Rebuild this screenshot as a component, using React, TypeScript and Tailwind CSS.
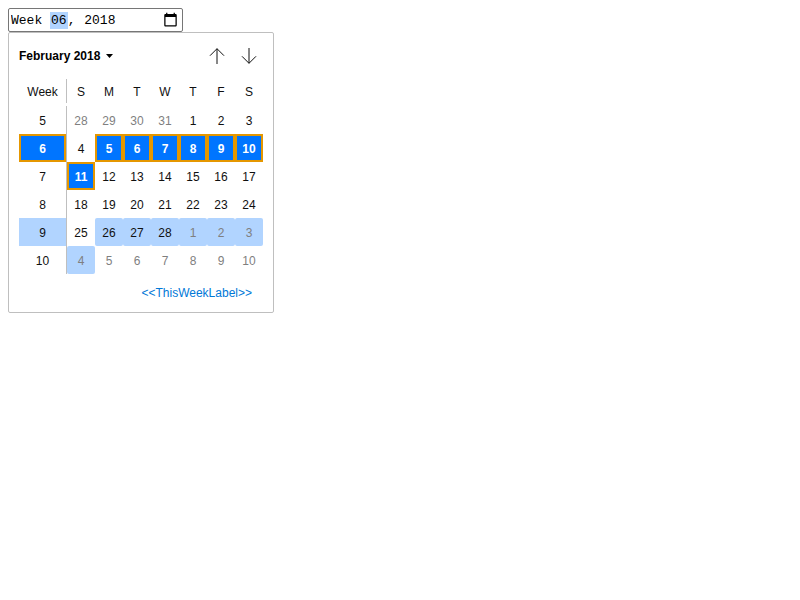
import React from "react";

type Week = { number: number; days: number[] };

const weekdays = ["S", "M", "T", "W", "T", "F", "S"];

const weeks: Week[] = [
  { number: 5, days: [28, 29, 30, 31, 1, 2, 3] },
  { number: 6, days: [4, 5, 6, 7, 8, 9, 10] },
  { number: 7, days: [11, 12, 13, 14, 15, 16, 17] },
  { number: 8, days: [18, 19, 20, 21, 22, 23, 24] },
  { number: 9, days: [25, 26, 27, 28, 1, 2, 3] },
  { number: 10, days: [4, 5, 6, 7, 8, 9, 10] },
];

const selectedStyle = "border-2 border-[#e59700] bg-[#0075ff] font-bold text-white";

// ISO weeks start on Monday, so a row's Sunday belongs to the week before.
function isoWeek(row: number, column: number) {
  return column === 0 ? weeks[row].number - 1 : weeks[row].number;
}

function weekStyle(week: number) {
  if (week === 6) return selectedStyle;
  if (week === 9) return "bg-[#b1d4ff] text-[#101010]";
  return "text-[#101010]";
}

function dayStyle(row: number, column: number) {
  const week = isoWeek(row, column);
  if (week === 6) return selectedStyle;
  const day = weeks[row].days[column];
  const outside = (row === 0 && day > 20) || (row > 3 && day < 20);
  const color = outside ? "text-[#7f7f7f]" : "text-[#101010]";
  return week === 9 ? `rounded-xs bg-[#b1d4ff] ${color}` : color;
}

function WeekField() {
  return (
    <div className="relative w-[175px]">
      <input
        type="week"
        aria-label="Week"
        defaultValue="2018-W06"
        className="block h-6 w-full rounded-xs border border-[#767676] bg-white px-0.5 pt-px font-['Liberation_Mono',monospace] text-[13px] text-black outline-none [&::-webkit-calendar-picker-indicator]:opacity-0 [&::-webkit-datetime-edit-week-field]:bg-[#b1d4ff]"
      />
      <svg
        className="pointer-events-none absolute top-1 right-[5px] size-[15px]"
        viewBox="0 0 24 24"
        fill="black"
        aria-hidden="true"
      >
        <path d="M20 3h-1V1h-2v2H7V1H5v2H4c-1.1 0-2 .9-2 2v16c0 1.1.9 2 2 2h16c1.1 0 2-.9 2-2V5c0-1.1-.9-2-2-2zm0 18H4V8h16v13z" />
      </svg>
    </div>
  );
}

function Arrow({ direction }: { direction: "up" | "down" }) {
  return (
    <button
      type="button"
      aria-label={direction === "up" ? "Previous month" : "Next month"}
      className="flex h-6 w-7 items-center justify-center"
    >
      <svg
        className="size-4"
        viewBox="0 0 16 16"
        fill="none"
        stroke="#101010"
        strokeWidth="1"
        aria-hidden="true"
      >
        <path d={direction === "up" ? "M8 16V.7M1 7.7l7-7 7 7" : "M8 0v15.3M1 8.3l7 7 7-7"} />
      </svg>
    </button>
  );
}

export default function App() {
  return (
    <main className="p-2 font-['Liberation_Sans',Arial,sans-serif] text-xs text-[#101010]">
      <WeekField />
      <section className="w-fit rounded-xs border border-[#bfbfbf] bg-white px-[10px]">
        <header className="flex h-[46px] items-center justify-between">
          <button type="button" className="flex items-center gap-1.5 font-bold text-black">
            February 2018
            <svg className="h-1 w-[7px]" viewBox="0 0 7 4" aria-hidden="true">
              <path d="M0 0h7L3.500 4z" />
            </svg>
          </button>
          <div className="flex gap-1">
            <Arrow direction="up" />
            <Arrow direction="down" />
          </div>
        </header>
        <table className="table-fixed border-separate border-spacing-0 text-center">
          <thead>
            <tr>
              <th scope="col" className="w-12 p-0 pb-[3px] font-normal">
                <div className="h-6 border-r border-[#bfbfbf] leading-[26px]">Week</div>
              </th>
              {weekdays.map((name, i) => (
                <th key={i} scope="col" className="w-7 p-0 pt-px pb-0.5 font-normal leading-6">
                  {name}
                </th>
              ))}
            </tr>
          </thead>
          <tbody>
            {weeks.map((week, row) => (
              <tr key={week.number}>
                <th scope="row" className="border-r border-[#bfbfbf] p-0 font-normal">
                  <button
                    type="button"
                    className={`flex h-7 w-full items-center justify-center pt-0.5 ${weekStyle(week.number)}`}
                  >
                    {week.number}
                  </button>
                </th>
                {week.days.map((day, column) => (
                  <td key={column} className="p-0">
                    <button
                      type="button"
                      className={`flex size-7 items-center justify-center pt-0.5 ${dayStyle(row, column)}`}
                    >
                      {day}
                    </button>
                  </td>
                ))}
              </tr>
            ))}
          </tbody>
        </table>
        <footer className="flex h-[38px] items-center justify-end pr-[11px]">
          <button type="button" className="text-[#0078d7]">
            {"<<ThisWeekLabel>>"}
          </button>
        </footer>
      </section>
    </main>
  );
}
